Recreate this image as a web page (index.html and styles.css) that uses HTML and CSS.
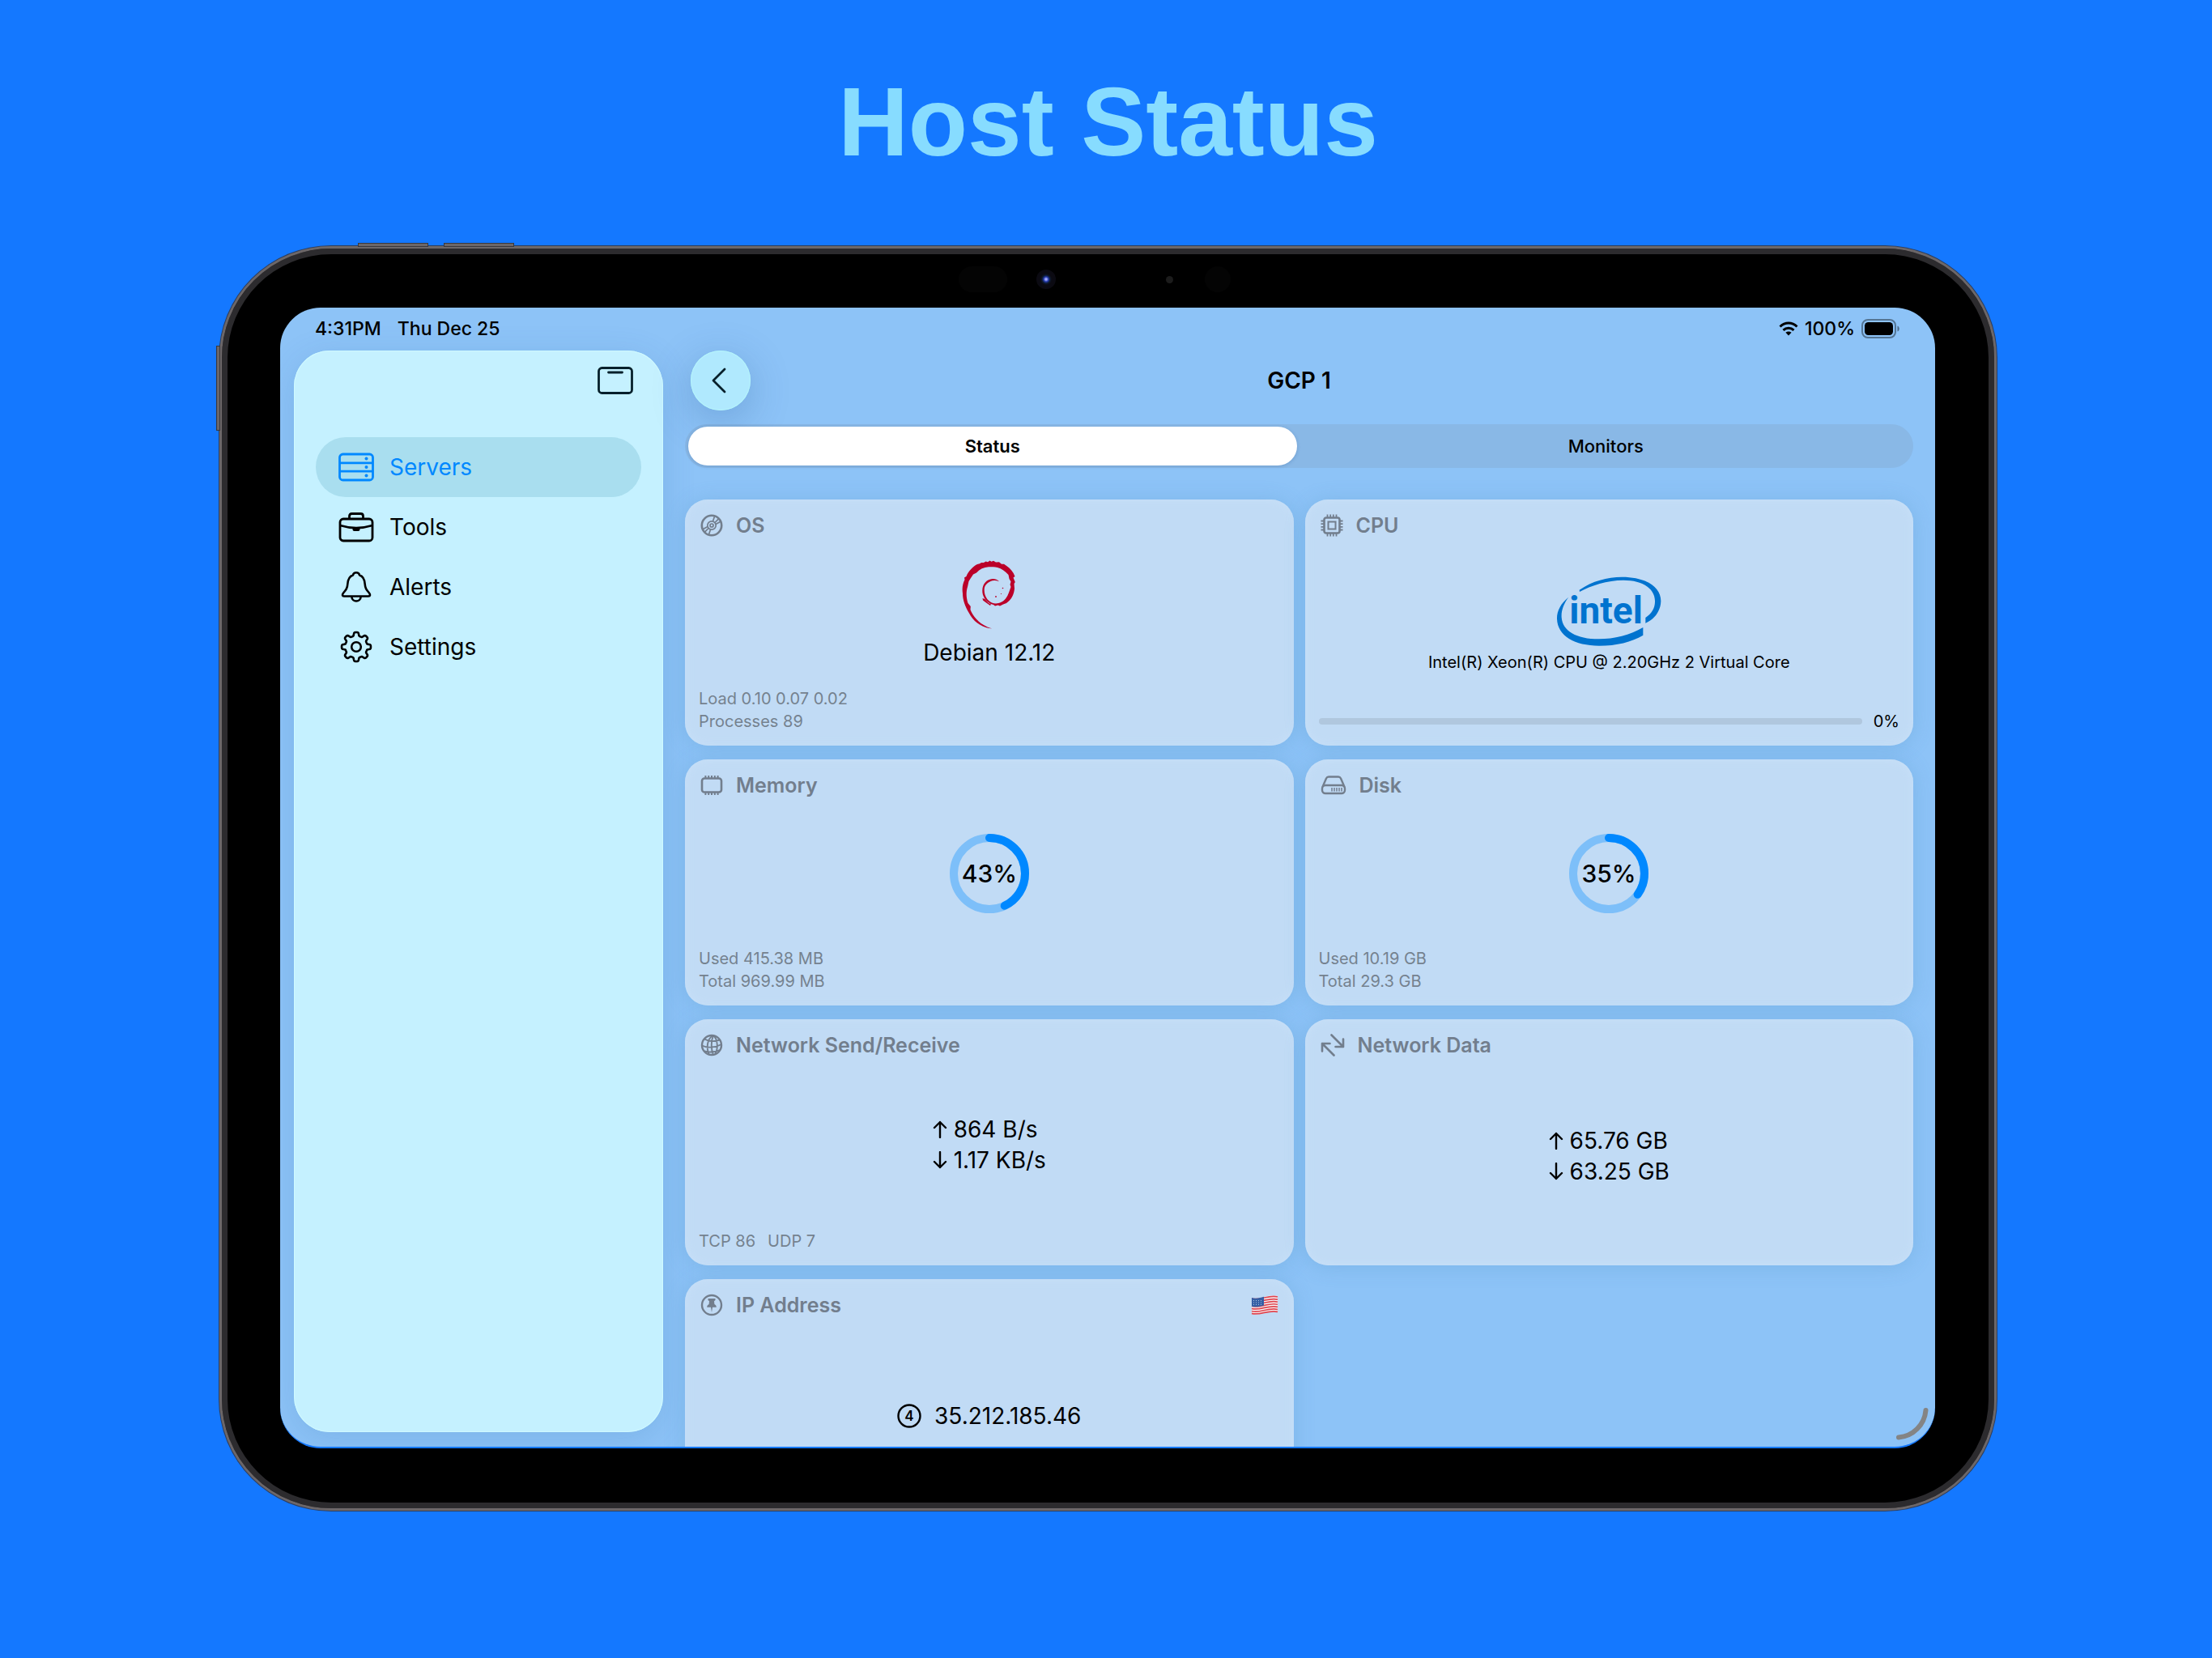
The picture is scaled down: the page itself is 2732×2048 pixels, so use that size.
FILE: index.html
```html
<!DOCTYPE html>
<html lang="en">
<head>
    <meta charset="UTF-8">
    <meta name="viewport" content="width=device-width, initial-scale=1.0">
    <title>Host Status</title>

    <link rel="stylesheet" href="styles.css">
</head>
<body>
    <h1>Host Status</h1>

    <div class="tablet">
        <span class="side-button power"></span>
        <span class="side-button volume-up"></span>
        <span class="side-button volume-down"></span>
        <div class="sensors">
            <span class="sensor wide"></span>
            <span class="sensor camera"></span>
            <span class="sensor mic"></span>
            <span class="sensor round"></span>
        </div>

        <div class="screen">
            <div class="status-bar">
                <div class="status-left">
                    <span>4:31PM</span>
                    <span>Thu Dec 25</span>
                </div>
                <div class="status-right">
                    <svg width="24" height="18" viewBox="0 0 24 18" fill="none" stroke="#000" stroke-width="3">
                        <path d="M1.5 6.5C7.5 .6 16.5 .6 22.5 6.5"/>
                        <path d="M5.5 10.8C9.2 7.3 14.8 7.3 18.5 10.8"/>
                        <path d="M12 17.5L8.4 13.8C10.5 12 13.5 12 15.6 13.8Z" fill="#000" stroke="none"/>
                    </svg>
                    <span>100%</span>
                    <svg width="48" height="24" viewBox="0 0 48 24">
                        <rect x="1" y="1" width="41" height="22" rx="7" fill="none" stroke="#000" stroke-opacity=".4" stroke-width="2"/>
                        <rect x="4" y="4" width="35" height="16" rx="4.5"/>
                        <path d="M44.5 8.5C47.5 9.5 47.5 14.5 44.5 15.5Z" fill-opacity=".45"/>
                    </svg>
                </div>
            </div>

            <div class="layout">
                <aside class="sidebar">
                    <button class="toggle" aria-label="Toggle sidebar">
                        <svg width="44" height="34" viewBox="0 0 44 34" fill="none" stroke="#06202b" stroke-width="2.8">
                            <rect x="1.5" y="1.5" width="41" height="31" rx="4"/>
                            <path d="M13.500 7H30.500" stroke-linecap="round"/>
                        </svg>
                    </button>
                    <nav class="menu">
                        <a href="#" class="menu-item active">
                            <svg width="44" height="36" viewBox="0 0 44 36" fill="none" stroke="currentColor" stroke-width="2.8">
                                <rect x="1.5" y="2" width="41" height="32" rx="4"/>
                                <path d="M1.5 12.8H42.5M1.5 23.2H42.5"/>
                                <g fill="currentColor" stroke="none">
                                    <circle cx="34.5" cy="7.6" r="2"/>
                                    <circle cx="34.5" cy="18" r="2"/>
                                    <circle cx="34.5" cy="28.4" r="2"/>
                                </g>
                            </svg>
                            Servers
                        </a>
                        <a href="#" class="menu-item">
                            <svg width="44" height="38" viewBox="0 0 44 38" fill="none" stroke="currentColor" stroke-width="2.8" stroke-linejoin="round">
                                <rect x="2" y="9" width="40" height="27" rx="4"/>
                                <path d="M13.5 9V5.5Q13.5 2.5 16.5 2.5H27.5Q30.5 2.5 30.5 5.500V9M2 17C15 21 29 21 42 17"/>
                                <path d="M17.5 19.5H26.5V22Q26.5 24 24.5 24H19.5Q17.5 24 17.5 22Z" fill="currentColor" stroke="none"/>
                            </svg>
                            Tools
                        </a>
                        <a href="#" class="menu-item">
                            <svg width="44" height="38" viewBox="0 0 44 38" fill="none" stroke="currentColor" stroke-width="2.6" stroke-linejoin="round">
                                <path d="M7 30.500C4.500 30.500 4.500 28.500 6 26.500C9.500 22.500 11 20.500 11.300 15.500C11.800 9 13.500 6 17.800 4.600C18.500 2.300 20 1.300 22 1.300C24 1.300 25.500 2.300 26.200 4.600C30.500 6 32.200 9 32.700 15.500C33 20.500 34.500 22.500 38 26.500C39.500 28.500 39.500 30.500 37 30.500Z"/>
                                <path d="M16.3 31C16.8 38.3 27.2 38.3 27.7 31"/>
                            </svg>
                            Alerts
                        </a>
                        <a href="#" class="menu-item">
                            <svg width="44" height="40" viewBox="0 0 44 40" fill="none" stroke="currentColor" stroke-width="2.6" stroke-linejoin="round">
                                <circle cx="22" cy="20" r="5.8"/>
                                <path id="gear" d=""/>
                            </svg>
                            Settings
                        </a>
                    </nav>
                </aside>

                <main class="content">
                    <header class="top-bar">
                        <button class="back" aria-label="Back">
                            <svg width="18" height="32" viewBox="0 0 18 32" fill="none" stroke="#06202b" stroke-width="2.8" stroke-linecap="round" stroke-linejoin="round">
                                <path d="M16 2L2 16L16 30"/>
                            </svg>
                        </button>
                        <h2>GCP 1</h2>
                    </header>

                    <div class="tabs" role="tablist">
                        <button class="tab selected" role="tab" aria-selected="true">Status</button>
                        <button class="tab" role="tab" aria-selected="false">Monitors</button>
                    </div>

                    <div class="cards">
                        <section class="card">
                            <h3>
                                <svg width="28" height="28" viewBox="0 0 28 28" fill="none" stroke="currentColor" stroke-width="1.7">
                                    <circle cx="14" cy="14" r="12.2" stroke-width="2.6"/>
                                    <circle cx="14" cy="14" r="5.2"/>
                                    <circle cx="14" cy="14" r="2"/>
                                    <path d="M15.5 8.8L17.5 3M18 10.5L22.5 5.8M19 12.5L24.5 9.5M12.5 19.2L10.5 25M10 17.5L5.5 22.2M9 15.5L3.5 18.5"/>
                                </svg>
                                OS
                            </h3>
                            <div class="card-body os-body">
                                <svg width="67" height="85" viewBox="0 0 67 85" fill="#bb0029">
                                    <path d="M37 84.300C33 84.500 27 82.500 22 79.500C15 75 12 71 8.700 65C4 57 1 49 1 41C0 34 1 29 3.500 24L3 21.500L5.500 20C7.500 14 14 7.500 19 5L22 4.200L24 3L27 3L29.500 1.500L32 2.200L34.500 .5L36.500 1.700L39 .8L42 2.500L46 2.300L49 4.700L52 4.800C57 8 61 11.500 63.700 16L65.500 20L63.500 21.500L65.800 27L64.500 29L65 35C64.500 42 61 49 55 53L51 54.500L47 56.500L44.500 55.600L41 56.500L39 55L35 53.700C28.500 49.500 25 44 25.300 37C25.700 30 29 25.500 34.500 23.700C39 22.300 43 23.500 46 26.200C42 24.700 38.500 24.600 35.500 26C30 28.500 27.500 32 27.700 37.500C28 44 31 49.500 37 52.500C43 55 50 52.500 54 47.500C57.500 43 59 37 60.500 33L59.500 30L60.500 26.500L58.500 23L57.500 18C53 13 49 10.300 44 8.900C40 7.500 36 8.500 33 8.200C27 8.500 22 11 18 15.500L14 17.500L11 22L8.500 26L7 33C5 39 5.300 46 7.500 53L10.800 57L10.500 61C13 68 19 75.500 27 80C30 82 33 83.300 37 84.300Z"/>
                                    <path d="M25.5 47L28.5 48L33 53L36 54.5L35 56L30 52.5L26 49.5Z"/>
                                    <circle cx="50.5" cy="34.5" r=".8"/>
                                    <circle cx="48.5" cy="41.5" r=".6"/>
                                    <circle cx="42" cy="45" r=".9"/>
                                </svg>
                                <p>Debian 12.12</p>
                            </div>
                            <div class="card-footer">
                                <p>Load 0.10 0.07 0.02</p>
                                <p>Processes 89</p>
                            </div>
                        </section>

                        <section class="card">
                            <h3>
                                <svg width="28" height="28" viewBox="0 0 28 28" fill="none" stroke="currentColor" stroke-width="2">
                                    <rect x="4.5" y="4.5" width="19" height="19" rx="2.5" stroke-width="2.6"/>
                                    <rect x="9.5" y="9.5" width="9" height="9"/>
                                    <path d="M8.5 .5V4M12.2 .5V4M15.8 .5V4M19.5 .5V4M8.5 24V27.5M12.2 24V27.5M15.8 24V27.5M19.5 24V27.5M.5 8.5H4M.5 12.2H4M.5 15.8H4M.5 19.5H4M24 8.5H27.5M24 12.2H27.5M24 15.8H27.5M24 19.5H27.5" stroke-width="1.8"/>
                                </svg>
                                CPU
                            </h3>
                            <div class="card-body cpu-body">
                                <svg width="130" height="86" viewBox="66 68 390 258" fill="#0073cf">
                                    <path d="M152 118C200 85 255 70 310 70C400 70 455 108 454 160C453 200 425 230 397 241V221C420 205 433 185 432 158C431 112 385 82 315 82C255 82 195 102 153 125Z"/>
                                    <path d="M112 145C82 168 68 198 69 225C71 290 135 325 225 325C290 325 345 311 388 286V257C340 285 280 300 225 300C140 300 90 270 86 220C84 195 95 167 112 145Z"/>
                                    <text x="115" y="241" class="intel-text">intel</text>
                                </svg>
                                <p>Intel(R) Xeon(R) CPU @ 2.20GHz 2 Virtual Core</p>
                            </div>
                            <div class="card-footer usage">
                                <progress id="cpu-usage" value="0" max="100" aria-label="CPU usage"></progress>
                                <label for="cpu-usage">0%</label>
                            </div>
                        </section>

                        <section class="card">
                            <h3>
                                <svg width="28" height="28" viewBox="0 0 28 28" fill="none" stroke="currentColor" stroke-width="2.6">
                                    <rect x="2" y="5.5" width="24" height="17" rx="3"/>
                                    <path d="M6.400 2V5.500M10.200 2V5.500M14 2V5.500M17.800 2V5.500M21.600 2V5.500M6.400 22.500V26M10.200 22.500V26M14 22.500V26M17.800 22.500V26M21.600 22.500V26" stroke-width="2"/>
                                </svg>
                                Memory
                            </h3>
                            <div class="card-body">
                                <svg class="ring" width="98" height="98" viewBox="0 0 98 98">
                                    <circle class="ring-track" cx="49" cy="49" r="44"/>
                                    <circle class="ring-value" cx="49" cy="49" r="44" pathLength="100" stroke-dasharray="43 57"/>
                                    <text x="49" y="60">43%</text>
                                </svg>
                            </div>
                            <div class="card-footer">
                                <p>Used 415.38 MB</p>
                                <p>Total 969.99 MB</p>
                            </div>
                        </section>

                        <section class="card">
                            <h3>
                                <svg width="32" height="28" viewBox="0 0 32 28" fill="none" stroke="currentColor" stroke-width="2.4" stroke-linejoin="round">
                                    <path d="M2.5 16L7 5.500Q8 3.500 10 3.500H22Q24 3.500 25 5.500L29.500 16"/>
                                    <rect x="2" y="14" width="28" height="10" rx="4"/>
                                    <path d="M14 17V21.500M17 17V21.500M20 17V21.500M23 17V21.500M26 17V21.500" stroke-width="1.5"/>
                                </svg>
                                Disk
                            </h3>
                            <div class="card-body">
                                <svg class="ring" width="98" height="98" viewBox="0 0 98 98">
                                    <circle class="ring-track" cx="49" cy="49" r="44"/>
                                    <circle class="ring-value" cx="49" cy="49" r="44" pathLength="100" stroke-dasharray="35 65"/>
                                    <text x="49" y="60">35%</text>
                                </svg>
                            </div>
                            <div class="card-footer">
                                <p>Used 10.19 GB</p>
                                <p>Total 29.3 GB</p>
                            </div>
                        </section>

                        <section class="card">
                            <h3>
                                <svg width="28" height="28" viewBox="0 0 28 28" fill="none" stroke="currentColor" stroke-width="1.9">
                                    <circle cx="14" cy="14" r="12" stroke-width="2.4"/>
                                    <path d="M16 2C8 6 7 18 11 26M16 2C13 9 13 19 16 26M16 2C22 7 22 19 18 25.500M5 6.500C11 10 18 9.500 24 7.500M2 14.500C9 18 19 17 26 13M5 21.500C11 23 18 23 24 20"/>
                                </svg>
                                Network Send/Receive
                            </h3>
                            <div class="card-body">
                                <ul class="traffic">
                                    <li>
                                        <svg class="arrow" viewBox="0 0 18 22"><path d="M9 21V2M2 9L9 2L16 9"/></svg>
                                        864 B/s
                                    </li>
                                    <li>
                                        <svg class="arrow" viewBox="0 0 18 22"><path d="M9 1V20M2 13L9 20L16 13"/></svg>
                                        1.17 KB/s
                                    </li>
                                </ul>
                            </div>
                            <div class="card-footer sockets">
                                <span>TCP 86</span>
                                <span>UDP 7</span>
                            </div>
                        </section>

                        <section class="card">
                            <h3>
                                <svg width="30" height="28" viewBox="0 0 30 28" fill="none" stroke="currentColor" stroke-width="2.6" stroke-linecap="round" stroke-linejoin="round">
                                    <path d="M13.500 1.500L28 16M28 6.500V16H18.500M16.500 26.500L2 12M2 21.500V12H11.500"/>
                                </svg>
                                Network Data
                            </h3>
                            <div class="card-body">
                                <ul class="traffic">
                                    <li>
                                        <svg class="arrow" viewBox="0 0 18 22"><path d="M9 21V2M2 9L9 2L16 9"/></svg>
                                        65.76 GB
                                    </li>
                                    <li>
                                        <svg class="arrow" viewBox="0 0 18 22"><path d="M9 1V20M2 13L9 20L16 13"/></svg>
                                        63.25 GB
                                    </li>
                                </ul>
                            </div>
                        </section>

                        <section class="card">
                            <h3>
                                <svg width="28" height="28" viewBox="0 0 28 28" fill="none" stroke="currentColor" stroke-width="2.4">
                                    <circle cx="14" cy="14" r="12"/>
                                    <path d="M9.500 6H18.500V8L17 9.300L17.400 13C19 13.800 19.800 15 19.800 16.800H15L14 23L13 16.800H8.200C8.200 15 9 13.800 10.600 13L11 9.300L9.500 8Z" fill="currentColor" stroke="none"/>
                                </svg>
                                IP Address
                                <svg class="flag" width="34" height="24" viewBox="0 0 34 24" role="img" aria-label="United States">
                                    <path d="M1 3C11 6 22-2 33 1V21C22 18 11 26 1 23Z" fill="#f6f4f6"/>
                                    <path d="M1 4C11 7 22-1 33 2M1 7.100C11 10.100 22 2.100 33 5.100M1 10.200C11 13.200 22 5.200 33 8.200M1 13.300C11 16.300 22 8.300 33 11.300M1 16.400C11 19.400 22 11.400 33 14.400M1 19.500C11 22.500 22 14.500 33 17.500M1 22.400C11 25.400 22 17.400 33 20.400" fill="none" stroke="#e0454f" stroke-width="1.7"/>
                                    <path d="M1 3C6 4.500 11 3.300 16 1.800V12.500C11 14 6 15 1 13.800Z" fill="#355fa5"/>
                                    <path d="M3 6.500H15M3 9H15M3 11.500H15" stroke="#a9bedd" stroke-width="1" stroke-dasharray="1 2"/>
                                </svg>
                            </h3>
                            <div class="card-body ip-body">
                                <svg width="30" height="30" viewBox="0 0 30 30">
                                    <circle cx="15" cy="15" r="13.5" fill="none" stroke="#000" stroke-width="2.4"/>
                                    <text x="15" y="21">4</text>
                                </svg>
                                <span>35.212.185.46</span>
                            </div>
                        </section>
                    </div>
                </main>
            </div>

            <svg class="corner" width="42" height="42" viewBox="0 0 42 42">
                <path d="M4 37.500C22 36 36 22 37.500 4"/>
            </svg>
        </div>
    </div>

    <script>
        // eight rounded teeth round the centre of the settings icon
        const points = [];
        for (let i = 0; i <= 160; i++) {
            const angle = i / 160 * Math.PI * 2;
            const wave = Math.cos(angle * 8);
            const radius = 15.8 + 2.2 * Math.tanh(wave * 2.5);
            points.push((22 + radius * Math.sin(angle)).toFixed(2) + " " + (20 - radius * Math.cos(angle)).toFixed(2));
        }
        document.getElementById("gear").setAttribute("d", "M" + points.join("L") + "Z");
    </script>
</body>
</html>
```

FILE: styles.css
```css
* {
    box-sizing: border-box;
}

body {
    font-family: Inter, "Liberation Sans", sans-serif;
    background-color: #1478ff;
    color: #000;
    margin: 0;
    padding: 0 266px 182px 271px;
    height: 100vh;
    display: flex;
    flex-direction: column;
}

h1, h2, h3, p, ul {
    margin: 0;
    padding: 0;
}

button {
    font-family: inherit;
    color: inherit;
    background: none;
    border: none;
    padding: 0;
    cursor: pointer;
}

svg {
    display: block;
    flex-shrink: 0;
}

h1 {
    font-family: "Liberation Sans", Arial, sans-serif;
    font-size: 120px;
    line-height: 140px;
    padding: 80px 0 84px;
    text-align: center;
    color: #87dcff;
}

/* tablet frame */
.tablet {
    position: relative;
    flex: 1;
    min-height: 0;
    display: flex;
    padding: 73px 73px 74px 72px;
    background-color: #000;
    border: 3px solid #6c6769;
    border-radius: 138px;
    box-shadow: inset 0 0 0 7px #2c2b2e, 0 0 0 1px #2f3e5c;
}

.side-button {
    position: absolute;
    background-color: #6c6769;
    border: 1px solid #39373b;
}

.power {
    left: -7px;
    top: 120px;
    width: 5px;
    height: 105px;
}

.volume-up, .volume-down {
    top: -7px;
    width: 87px;
    height: 5px;
}

.volume-up {
    left: 168px;
}

.volume-down {
    left: 274px;
}

.sensors {
    position: absolute;
    top: 21px;
    left: 910px;
    height: 34px;
    display: flex;
    align-items: center;
}

.sensor {
    border-radius: 17px;
    background-color: #040404;
}

.wide {
    width: 60px;
    height: 32px;
}

.camera {
    width: 24px;
    height: 24px;
    margin-left: 36px;
    background: radial-gradient(circle, #9fa8ff 0 1px, #2237a8 3px, #0c1a30 5px, #0b0a12 7px);
}

.mic {
    width: 9px;
    height: 9px;
    margin-left: 136px;
    background-color: #1c1c1c;
}

.round {
    width: 32px;
    height: 32px;
    margin-left: 39px;
}

.screen {
    position: relative;
    flex: 1;
    min-width: 0;
    display: flex;
    flex-direction: column;
    overflow: hidden;
    background-color: #8dc3f7;
    border-bottom: 2px solid #1478ff;
    border-radius: 50px;
}

/* status bar */
.status-bar {
    display: flex;
    justify-content: space-between;
    height: 53px;
    padding: 0 43px 2px;
    font-size: 23px;
    font-weight: 500;
}

.status-left, .status-right {
    display: flex;
    align-items: center;
}

.status-left {
    gap: 20px;
}

.status-right {
    gap: 8px;
}

.layout {
    flex: 1;
    min-height: 0;
    display: flex;
}

/* sidebar */
.sidebar {
    width: 456px;
    margin: 0 0 18px 17px;
    padding: 20px 27px;
    background-color: #c5f1ff;
    border-radius: 44px;
    box-shadow: inset 0 0 0 1px #cff9ff, 0 8px 40px rgba(40, 100, 160, 0.16);
}

.toggle {
    display: block;
    margin: 0 10px 53px auto;
}

.menu-item {
    display: flex;
    align-items: center;
    gap: 19px;
    height: 74px;
    padding: 0 28px;
    border-radius: 37px;
    font-size: 28px;
    color: #000;
    text-decoration: none;
}

.active {
    background-color: #a9deef;
    color: #0088ff;
}

/* content */
.content {
    flex: 1;
    min-width: 0;
    padding: 0 27px;
}

.top-bar {
    display: grid;
    grid-template-columns: 1fr auto 1fr;
    align-items: center;
    margin-bottom: 17px;
}

.back {
    display: flex;
    align-items: center;
    justify-content: center;
    width: 74px;
    height: 74px;
    margin-left: 7px;
    padding-right: 4px;
    border-radius: 50%;
    background-color: #b0e9fe;
    box-shadow: inset 0 0 0 1px #b4f4fb, 0 12px 50px rgba(30, 80, 140, 0.28);
}

h2 {
    font-size: 28px;
    font-weight: 600;
}

.tabs {
    display: flex;
    gap: 6px;
    padding: 3px 4px;
    border-radius: 27px;
    background-color: #89b8e6;
    margin-bottom: 39px;
}

.tab {
    flex: 1;
    height: 48px;
    border-radius: 24px;
    font-size: 22px;
    font-weight: 500;
}

.selected {
    background-color: #fff;
    font-weight: 600;
    box-shadow: 0 1px 4px rgba(30, 80, 140, 0.25);
}

.cards {
    display: grid;
    grid-template-columns: 1fr 1fr;
    gap: 17px 14px;
}

.card {
    display: flex;
    flex-direction: column;
    height: 304px;
    padding: 15px 17px 16px;
    border-radius: 28px;
    background-color: #c1dbf5;
    box-shadow: inset 0 0 12px #c8e0f8, 0 2px 26px rgba(70, 140, 190, 0.24);
}

h3 {
    display: flex;
    align-items: center;
    gap: 16px;
    height: 34px;
    padding: 0 2px;
    font-size: 25px;
    font-weight: 600;
    color: #727e8d;
}

.flag {
    margin-left: auto;
}

.card-body {
    flex: 1;
    display: flex;
    align-items: center;
    justify-content: center;
    font-size: 28px;
    line-height: 34px;
}

.os-body, .cpu-body {
    flex-direction: column;
}

.os-body {
    gap: 12px;
}

.cpu-body {
    gap: 6px;
    font-size: 20px;
    line-height: 28px;
}

.intel-text {
    font-family: Roboto, sans-serif;
    font-size: 138px;
    font-weight: 700;
}

.card-footer {
    font-size: 20px;
    line-height: 28px;
    color: #75828f;
}

.usage {
    display: flex;
    align-items: center;
    gap: 14px;
}

.usage label {
    color: #000;
}

progress {
    appearance: none;
    flex: 1;
    height: 8px;
    border: none;
    border-radius: 4px;
    overflow: hidden;
    background-color: #b0c7de;
}

progress::-webkit-progress-bar {
    background-color: #b0c7de;
}

progress::-webkit-progress-value {
    background-color: #0088ff;
}

.ring circle {
    fill: none;
    stroke-width: 10px;
}

.ring .ring-track {
    stroke: #7dbff9;
}

.ring .ring-value {
    stroke: #0088ff;
    stroke-linecap: round;
    transform: rotate(-90deg);
    transform-origin: center;
}

.ring text {
    font-size: 30px;
    font-weight: 500;
    text-anchor: middle;
}

.traffic {
    list-style: none;
    line-height: 38px;
}

.traffic li {
    display: flex;
    align-items: center;
    gap: 8px;
}

.arrow {
    width: 18px;
    height: 22px;
    fill: none;
    stroke: #000;
    stroke-width: 2.4px;
    stroke-linecap: round;
    stroke-linejoin: round;
}

.sockets {
    display: flex;
    gap: 15px;
}

.ip-body {
    gap: 16px;
}

.ip-body text {
    font-size: 17px;
    font-weight: 600;
    text-anchor: middle;
}

/* resize handle in the corner of the window */
.corner {
    position: absolute;
    right: 7px;
    bottom: 7px;
    fill: none;
    stroke: #848484;
    stroke-width: 6px;
    stroke-linecap: round;
}
```
